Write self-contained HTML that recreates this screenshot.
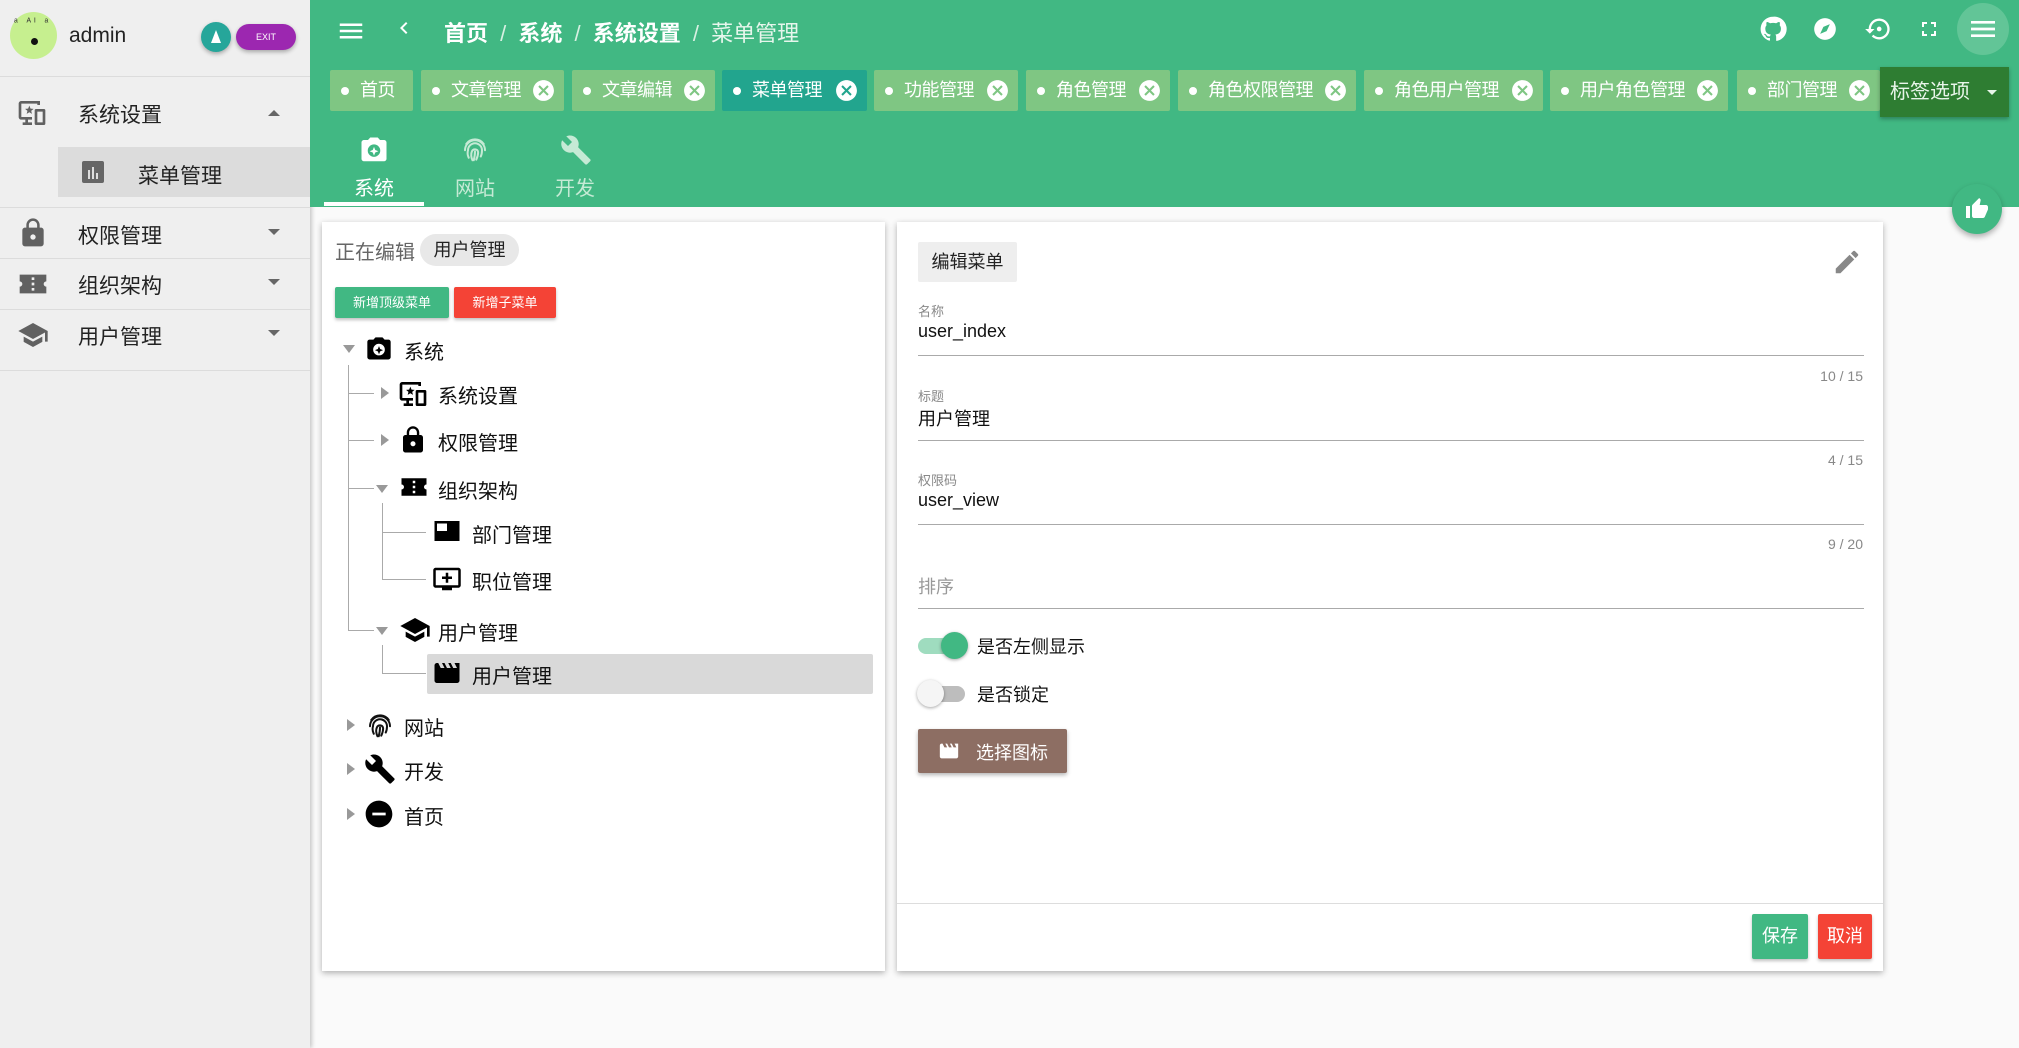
<!DOCTYPE html>
<html><head><meta charset="utf-8">
<style>
*{box-sizing:border-box;margin:0;padding:0}
body{width:2019px;height:1048px;overflow:hidden;background:#fafafa;font-family:"Liberation Sans","Noto Sans CJK SC",sans-serif;position:relative;color:#222}
.a{position:absolute}
svg{display:block}
.side{left:0;top:0;width:310px;height:1048px;background:#efefef;box-shadow:2px 0 4px rgba(0,0,0,.2)}
.hr{position:absolute;left:0;width:310px;height:1px;background:#dcdcdc}
.mi{position:absolute;font-size:21px;color:#222;left:78px}
.green{left:310px;top:0;width:1709px;height:207px;background:#41b883}
.tab{position:absolute;top:70px;height:41px;background:#7fc683;color:#fff;font-size:18px;line-height:41px;padding-left:30px;border-radius:2px;white-space:nowrap;letter-spacing:-0.5px}
.tab:before{content:"";position:absolute;left:11px;top:17px;width:8px;height:8px;border-radius:50%;background:#fff}
.tab .x{position:absolute;right:8px;top:8px;width:25px;height:25px}
.card{background:#fff;box-shadow:0 2px 6px rgba(0,0,0,.3)}
.tr{position:absolute;font-size:20px;color:#111}
.lbl{position:absolute;left:918px;font-size:13px;color:#888}
.val{position:absolute;left:918px;font-size:18px;color:#111}
.line{position:absolute;left:918px;width:946px;height:1px;background:#aaa}
.cnt{position:absolute;right:156px;font-size:14px;color:#888}
.vl{position:absolute;width:1px;background:#aaa}
.hl{position:absolute;height:1px;background:#aaa}
</style></head><body>
<svg width="0" height="0" style="position:absolute">
<defs>
<symbol id="menu" viewBox="0 0 24 24"><path d="M3 18h18v-2H3v2zm0-5h18v-2H3v2zm0-7v2h18V6H3z"/></symbol>
<symbol id="lock" viewBox="0 0 24 24"><path d="M18 8h-1V6c0-2.76-2.24-5-5-5S7 3.24 7 6v2H6c-1.1 0-2 .9-2 2v10c0 1.1.9 2 2 2h12c1.1 0 2-.9 2-2V10c0-1.1-.9-2-2-2zm-6 9c-1.1 0-2-.9-2-2s.9-2 2-2 2 .9 2 2-.9 2-2 2zm3.1-9H8.9V6c0-1.710 1.39-3.1 3.1-3.1 1.71 0 3.1 1.39 3.1 3.1v2z"/></symbol>
<symbol id="school" viewBox="0 0 24 24"><path d="M5 13.18v4L12 21l7-3.82v-4L12 17l-7-3.82zM12 3L1 9l11 6 9-4.91V17h2V9L12 3z"/></symbol>
<symbol id="build" viewBox="0 0 24 24"><path d="M22.7 19l-9.1-9.1c.9-2.3.4-5-1.5-6.9-2-2-5-2.4-7.4-1.3L9 6 6 9 1.6 4.7C.4 7.1.9 10.1 2.9 12.1c1.9 1.9 4.6 2.4 6.9 1.5l9.1 9.1c.4.4 1 .4 1.4 0l2.3-2.3c.5-.4.5-1.1.1-1.4z"/></symbol>
<symbol id="minus" viewBox="0 0 24 24"><path d="M12 2C6.48 2 2 6.48 2 12s4.48 10 10 10 10-4.48 10-10S17.52 2 12 2zm5 11H7v-2h10v2z"/></symbol>
<symbol id="movie" viewBox="0 0 24 24"><path d="M18 4l2 4h-3l-2-4h-2l2 4h-3l-2-4H8l2 4H7L5 4H4c-1.1 0-1.99.9-1.99 2L2 18c0 1.1.9 2 2 2h16c1.1 0 2-.9 2-2V4h-4z"/></symbol>
<symbol id="cam" viewBox="0 0 24 24"><path d="M9 2L7.2 4H4c-1.1 0-2 .9-2 2v13c0 1.1.9 2 2 2h16c1.1 0 2-.9 2-2V6c0-1.1-.9-2-2-2h-3.2L15 2H9zm3 5.5a5 5 0 1 1 0 10 5 5 0 0 1 0-10z"/><path d="M12 9.5l1 2.5 2.5 1-2.5 1-1 2.5-1-2.5-2.5-1 2.5-1z"/></symbol>
<symbol id="finger" viewBox="0 0 24 24"><g fill="none" stroke-width="1.6" stroke-linecap="round"><path d="M5 8a8.5 8.5 0 0 1 14 0"/><path d="M4 13a8 8 0 0 1 16 0"/><path d="M7 19c-1-2-1.2-4-.6-6a5.6 5.6 0 0 1 11.2 0c0 2 0 3-1 5"/><path d="M10 21c-1-2-1.5-5-.5-7a2.6 2.6 0 0 1 5 .5c0 2-.5 4-1.5 6"/><path d="M12 14c0 3-.5 5-1 7"/></g></symbol>
<symbol id="cancel" viewBox="0 0 24 24"><path d="M12 2C6.47 2 2 6.47 2 12s4.47 10 10 10 10-4.47 10-10S17.530 2 12 2zm5 13.59L15.59 17 12 13.41 8.41 17 7 15.59 10.59 12 7 8.41 8.41 7 12 10.59 15.59 7 17 8.41 13.41 12 17 15.59z"/></symbol>
<symbol id="monstar" viewBox="0 0 24 24"><path d="M2 3h16v3h-2V5H4v10h8v2h-3v2h3v2H5v-2h2v-2H4c-1.1 0-2-.9-2-2V5c0-1.1.9-2 2-2z"/><path d="M10 6.5l.9 2.2 2.3.2-1.8 1.5.6 2.3-2-1.3-2 1.3.6-2.3-1.8-1.5 2.3-.2z"/><path d="M15 9h6c.6 0 1 .4 1 1v10c0 .6-.4 1-1 1h-6c-.6 0-1-.4-1-1V10c0-.6.4-1 1-1zm1 2v8h4v-8z"/></symbol>
<symbol id="ticket" viewBox="0 0 24 24"><path d="M2 5h20v5a2 2 0 0 0 0 4v5H2v-5a2 2 0 0 0 0-4zM11 7v2h2V7zm0 4v2h2v-2zm0 4v2h2v-2z" fill-rule="evenodd"/></symbol>
<symbol id="dept" viewBox="0 0 24 24"><path d="M2 4h20v16H2zM4 6v6h8V6z" fill-rule="evenodd"/></symbol>
<symbol id="addmon" viewBox="0 0 24 24"><path d="M21 3H3c-1.1 0-2 .9-2 2v12c0 1.1.9 2 2 2h5v2h8v-2h5c1.1 0 2-.9 2-2V5c0-1.1-.9-2-2-2zm0 14H3V5h18v12zM16 10v2h-3v3h-2v-3H8v-2h3V7h2v3z"/></symbol>
</defs></svg>

<!-- sidebar -->
<div class="a side">
  <div class="a" style="left:10px;top:12px;width:47px;height:47px;border-radius:50%;background:#c6ef8f"></div>
  <div class="a" style="left:31px;top:38px;width:7px;height:7px;border-radius:50%;background:#111"></div>
  <div class="a" style="left:14px;top:17px;font-size:10px;color:#333;letter-spacing:3px">ᵃ ᴬᴵ ᵃ</div>
  <div class="a" style="left:69px;top:24px;font-size:21px;color:#222">admin</div>
  <div class="a" style="left:201px;top:22px;width:30px;height:30px;border-radius:50%;background:#26a69a;box-shadow:0 2px 4px rgba(0,0,0,.3)"><div style="width:0;height:0;margin:8px auto 0;border-left:5px solid transparent;border-right:5px solid transparent;border-bottom:13px solid #fff"></div></div>
  <div class="a" style="left:236px;top:24px;width:60px;height:26px;border-radius:13px;background:#9c27b0;color:#fff;font-size:9px;text-align:center;line-height:26px;box-shadow:0 2px 4px rgba(0,0,0,.3)">EXIT</div>
  <div class="hr" style="top:76px"></div>
  <svg class="a" style="left:16px;top:97px" width="32" height="32" fill="#616161"><use href="#monstar"/></svg>
  <div class="mi" style="top:99px">系统设置</div>
  <svg class="a" style="left:260px;top:100px" width="28" height="28" fill="#666"><path d="M8 16l6-6 6 6z"/></svg>
  <div class="a" style="left:58px;top:147px;width:252px;height:50px;background:#dcdcdc"></div>
  <div class="a" style="left:82px;top:161px;width:22px;height:22px;background:#666;border-radius:2px"><div style="position:absolute;left:6px;top:9px;width:2px;height:9px;background:#ddd"></div><div style="position:absolute;left:10px;top:6px;width:2px;height:12px;background:#ddd"></div><div style="position:absolute;left:14px;top:12px;width:2px;height:6px;background:#ddd"></div></div>
  <div class="mi" style="top:160px;left:138px">菜单管理</div>
  <div class="hr" style="top:207px"></div>
  <svg class="a" style="left:17px;top:217px" width="32" height="32" fill="#616161"><use href="#lock"/></svg>
  <div class="mi" style="top:220px">权限管理</div>
  <svg class="a" style="left:260px;top:219px" width="28" height="28" fill="#666"><path d="M8 10l6 6 6-6z"/></svg>
  <div class="hr" style="top:258px"></div>
  <svg class="a" style="left:17px;top:268px" width="32" height="32" fill="#616161"><use href="#ticket"/></svg>
  <div class="mi" style="top:270px">组织架构</div>
  <svg class="a" style="left:260px;top:269px" width="28" height="28" fill="#666"><path d="M8 10l6 6 6-6z"/></svg>
  <div class="hr" style="top:309px"></div>
  <svg class="a" style="left:17px;top:319px" width="32" height="32" fill="#616161"><use href="#school"/></svg>
  <div class="mi" style="top:321px">用户管理</div>
  <svg class="a" style="left:260px;top:320px" width="28" height="28" fill="#666"><path d="M8 10l6 6 6-6z"/></svg>
  <div class="hr" style="top:370px"></div>
</div>

<!-- green header -->
<div class="a green"></div>
<svg class="a" style="left:336px;top:16px" width="30" height="30" fill="#fff"><use href="#menu"/></svg>
<svg class="a" style="left:392px;top:16px" width="28" height="28" fill="#fff"><path d="M15.41 7.41L14 6l-6 6 6 6 1.41-1.41L10.83 12z"/></svg>
<div class="a" style="left:444px;top:16px;font-size:22px;color:#fff;font-weight:bold;white-space:nowrap">首页 <span style="font-weight:normal;color:#d7f0e2;margin:0 6px">/</span> 系统 <span style="font-weight:normal;color:#d7f0e2;margin:0 6px">/</span> 系统设置 <span style="font-weight:normal;color:#d7f0e2;margin:0 6px">/</span> <span style="font-weight:normal;color:#e6f6ec">菜单管理</span></div>
<svg class="a" style="left:1759px;top:15px" width="28" height="28" fill="#fff" viewBox="0 0 24 24"><path d="M12 1.5a10.5 10.5 0 0 0-3.3 20.5c.5.1.7-.2.7-.5v-1.9c-2.9.6-3.5-1.3-3.5-1.3-.5-1.2-1.2-1.5-1.2-1.5-.9-.7.1-.6.1-.6 1.1.1 1.6 1.1 1.6 1.1.9 1.6 2.5 1.2 3.1.9.1-.7.4-1.2.7-1.4-2.3-.3-4.8-1.2-4.8-5.2 0-1.1.4-2.1 1.1-2.8-.1-.3-.5-1.4.1-2.8 0 0 .9-.3 2.9 1.1a10 10 0 0 1 5.2 0c2-1.4 2.9-1.1 2.9-1.1.6 1.4.2 2.5.1 2.8.7.7 1.1 1.700 1.1 2.8 0 4-2.5 4.9-4.8 5.2.4.3.7 1 .7 2v2.9c0 .3.2.6.7.5A10.5 10.5 0 0 0 12 1.5z"/></svg>
<svg class="a" style="left:1812px;top:16px" width="26" height="26" viewBox="0 0 24 24"><circle cx="12" cy="12" r="10" fill="#fff"/><path d="M16.5 7.5l-3 6.5-6 2.5 3-6.5z" fill="#41b883"/></svg>
<svg class="a" style="left:1864px;top:15px" width="28" height="28" fill="#fff" viewBox="0 0 24 24"><path d="M13 3a9 9 0 0 0-9 9H1l3.89 3.89.07.14L9 12H6c0-3.87 3.13-7 7-7s7 3.13 7 7-3.13 7-7 7c-1.93 0-3.68-.79-4.94-2.06l-1.42 1.42A8.954 8.954 0 0 0 13 21a9 9 0 0 0 0-18z"/><circle cx="13" cy="12" r="2"/></svg>
<svg class="a" style="left:1917px;top:17px" width="24" height="24" fill="#fff" viewBox="0 0 24 24"><path d="M7 14H5v5h5v-2H7v-3zm-2-4h2V7h3V5H5v5zm12 7h-3v2h5v-5h-2v3zM14 5v2h3v3h2V5h-5z"/></svg>
<div class="a" style="left:1957px;top:3px;width:52px;height:52px;border-radius:50%;background:#62c597"></div>
<svg class="a" style="left:1967px;top:13px" width="32" height="32" fill="#fff"><use href="#menu"/></svg>

<!-- tabs -->
<div class="tab" style="left:330px;width:83px">首页</div>
<div class="tab" style="left:421px;width:143px">文章管理<svg class="x" fill="#fff"><use href="#cancel"/></svg></div>
<div class="tab" style="left:572px;width:143px">文章编辑<svg class="x" fill="#fff"><use href="#cancel"/></svg></div>
<div class="tab" style="left:722px;width:145px;background:#22a58e">菜单管理<svg class="x" fill="#fff"><use href="#cancel"/></svg></div>
<div class="tab" style="left:874px;width:144px">功能管理<svg class="x" fill="#fff"><use href="#cancel"/></svg></div>
<div class="tab" style="left:1026px;width:144px">角色管理<svg class="x" fill="#fff"><use href="#cancel"/></svg></div>
<div class="tab" style="left:1178px;width:178px">角色权限管理<svg class="x" fill="#fff"><use href="#cancel"/></svg></div>
<div class="tab" style="left:1364px;width:179px">角色用户管理<svg class="x" fill="#fff"><use href="#cancel"/></svg></div>
<div class="tab" style="left:1550px;width:178px">用户角色管理<svg class="x" fill="#fff"><use href="#cancel"/></svg></div>
<div class="tab" style="left:1737px;width:143px">部门管理<svg class="x" fill="#fff"><use href="#cancel"/></svg></div>
<div class="a" style="left:1880px;top:67px;width:129px;height:50px;background:#2e7d32;color:#e8f5e9;font-size:20px;line-height:50px;padding-left:10px;box-shadow:0 2px 4px rgba(0,0,0,.3)">标签选项<svg class="a" style="left:100px;top:13px" width="24" height="24" fill="#e8f5e9"><path d="M7 10l5 5 5-5z"/></svg></div>

<!-- sub tabs -->
<svg class="a" style="left:359px;top:135px" width="30" height="30" fill="#fff"><use href="#cam"/></svg>
<div class="a" style="left:324px;top:172px;width:100px;text-align:center;font-size:20px;color:#fff">系统</div>
<div class="a" style="left:324px;top:202px;width:100px;height:4px;background:#fff"></div>
<svg class="a" style="left:460px;top:134px" width="30" height="30" stroke="#c5ead5"><use href="#finger"/></svg>
<div class="a" style="left:425px;top:172px;width:100px;text-align:center;font-size:20px;color:#c5ead5">网站</div>
<svg class="a" style="left:560px;top:134px" width="32" height="32" fill="#c5ead5"><use href="#build"/></svg>
<div class="a" style="left:525px;top:172px;width:100px;text-align:center;font-size:20px;color:#c5ead5">开发</div>
<div class="a" style="left:1952px;top:184px;width:50px;height:50px;border-radius:50%;background:#41b883;box-shadow:0 3px 6px rgba(0,0,0,.3)"><svg style="margin:13px" width="24" height="24" fill="#fff" viewBox="0 0 24 24"><path d="M1 21h4V9H1v12zm22-11c0-1.1-.9-2-2-2h-6.31l.95-4.57.03-.32c0-.41-.17-.79-.44-1.06L14.17 1 7.59 7.590C7.22 7.95 7 8.45 7 9v10c0 1.1.9 2 2 2h9c.83 0 1.54-.5 1.84-1.22l3.02-7.05c.09-.23.14-.47.14-.73v-1.91l-.01-.01L23 10z"/></svg></div>

<!-- left card -->
<div class="a card" style="left:322px;top:222px;width:563px;height:749px"></div>
<div class="a" style="left:335px;top:236px;font-size:20px;color:#666">正在编辑</div>
<div class="a" style="left:420px;top:234px;width:99px;height:32px;border-radius:16px;background:#e8e8e8;font-size:18px;line-height:32px;text-align:center;color:#222">用户管理</div>
<div class="a" style="left:335px;top:287px;width:114px;height:31px;background:#41b883;color:#fff;font-size:13px;line-height:31px;text-align:center;border-radius:2px;box-shadow:0 2px 3px rgba(0,0,0,.25)">新增顶级菜单</div>
<div class="a" style="left:454px;top:287px;width:102px;height:31px;background:#f44336;color:#fff;font-size:13px;line-height:31px;text-align:center;border-radius:2px;box-shadow:0 2px 3px rgba(0,0,0,.25)">新增子菜单</div>

<div class="vl" style="left:348px;top:365px;height:266px"></div>
<div class="hl" style="left:348px;width:26px;top:393px"></div>
<div class="hl" style="left:348px;width:26px;top:440px"></div>
<div class="hl" style="left:348px;width:26px;top:488px"></div>
<div class="hl" style="left:348px;width:26px;top:630px"></div>
<div class="vl" style="left:382px;top:503px;height:77px"></div>
<div class="hl" style="left:382px;width:44px;top:532px"></div>
<div class="hl" style="left:382px;width:44px;top:579px"></div>
<div class="vl" style="left:382px;top:645px;height:28px"></div>
<div class="hl" style="left:382px;width:44px;top:673px"></div>
<div class="a" style="left:427px;top:654px;width:446px;height:40px;background:#d9d9d9;border-radius:2px"></div>

<svg class="a" style="left:341px;top:341px" width="16" height="16" fill="#999"><path d="M2 4h12l-6 8z"/></svg>
<svg class="a" style="left:365px;top:335px" width="28" height="28"><use href="#cam"/></svg>
<div class="tr" style="left:404px;top:336px">系统</div>

<svg class="a" style="left:377px;top:385px" width="16" height="16" fill="#999"><path d="M4 2v12l8-6z"/></svg>
<svg class="a" style="left:397px;top:378px" width="32" height="32"><use href="#monstar"/></svg>
<div class="tr" style="left:438px;top:380px">系统设置</div>

<svg class="a" style="left:377px;top:432px" width="16" height="16" fill="#999"><path d="M4 2v12l8-6z"/></svg>
<svg class="a" style="left:398px;top:425px" width="30" height="30"><use href="#lock"/></svg>
<div class="tr" style="left:438px;top:427px">权限管理</div>

<svg class="a" style="left:374px;top:481px" width="16" height="16" fill="#999"><path d="M2 4h12l-6 8z"/></svg>
<svg class="a" style="left:399px;top:472px" width="30" height="30"><use href="#ticket"/></svg>
<div class="tr" style="left:438px;top:475px">组织架构</div>

<svg class="a" style="left:432px;top:516px" width="30" height="30"><use href="#dept"/></svg>
<div class="tr" style="left:472px;top:519px">部门管理</div>

<svg class="a" style="left:432px;top:564px" width="30" height="30"><use href="#addmon"/></svg>
<div class="tr" style="left:472px;top:566px">职位管理</div>

<svg class="a" style="left:374px;top:623px" width="16" height="16" fill="#999"><path d="M2 4h12l-6 8z"/></svg>
<svg class="a" style="left:399px;top:614px" width="32" height="32"><use href="#school"/></svg>
<div class="tr" style="left:438px;top:617px">用户管理</div>

<svg class="a" style="left:432px;top:658px" width="30" height="30"><use href="#movie"/></svg>
<div class="tr" style="left:472px;top:660px">用户管理</div>

<svg class="a" style="left:343px;top:717px" width="16" height="16" fill="#999"><path d="M4 2v12l8-6z"/></svg>
<svg class="a" style="left:365px;top:710px" width="30" height="30" stroke="#111"><use href="#finger"/></svg>
<div class="tr" style="left:404px;top:712px">网站</div>

<svg class="a" style="left:343px;top:761px" width="16" height="16" fill="#999"><path d="M4 2v12l8-6z"/></svg>
<svg class="a" style="left:364px;top:753px" width="32" height="32"><use href="#build"/></svg>
<div class="tr" style="left:404px;top:756px">开发</div>

<svg class="a" style="left:343px;top:806px" width="16" height="16" fill="#999"><path d="M4 2v12l8-6z"/></svg>
<svg class="a" style="left:363px;top:798px" width="32" height="32"><use href="#minus"/></svg>
<div class="tr" style="left:404px;top:801px">首页</div>

<!-- right card -->
<div class="a card" style="left:897px;top:222px;width:986px;height:749px"></div>
<div class="a" style="left:918px;top:242px;width:99px;height:40px;background:#eeeeee;border-radius:2px;font-size:18px;line-height:40px;text-align:center;color:#222">编辑菜单</div>
<svg class="a" style="left:1832px;top:247px" width="30" height="30" fill="#888" viewBox="0 0 24 24"><path d="M3 17.25V21h3.75L17.81 9.94l-3.75-3.75L3 17.25zM20.71 7.04c.39-.39.39-1.02 0-1.41l-2.34-2.34c-.39-.39-1.02-.39-1.41 0l-1.83 1.83 3.75 3.75 1.83-1.83z"/></svg>

<div class="lbl" style="top:301px">名称</div>
<div class="val" style="top:321px">user_index</div>
<div class="line" style="top:355px"></div>
<div class="cnt" style="top:368px">10 / 15</div>

<div class="lbl" style="top:386px">标题</div>
<div class="val" style="top:405px">用户管理</div>
<div class="line" style="top:440px"></div>
<div class="cnt" style="top:452px">4 / 15</div>

<div class="lbl" style="top:470px">权限码</div>
<div class="val" style="top:490px">user_view</div>
<div class="line" style="top:524px"></div>
<div class="cnt" style="top:536px">9 / 20</div>

<div class="val" style="top:573px;color:#999">排序</div>
<div class="line" style="top:608px"></div>

<div class="a" style="left:918px;top:638px;width:44px;height:16px;border-radius:8px;background:#9fdcbf"></div>
<div class="a" style="left:941px;top:632px;width:27px;height:27px;border-radius:50%;background:#41b883;box-shadow:0 1px 3px rgba(0,0,0,.35)"></div>
<div class="a" style="left:977px;top:633px;font-size:18px;color:#111">是否左侧显示</div>

<div class="a" style="left:921px;top:686px;width:44px;height:16px;border-radius:8px;background:#bdbdbd"></div>
<div class="a" style="left:917px;top:680px;width:27px;height:27px;border-radius:50%;background:#f5f5f5;box-shadow:0 1px 3px rgba(0,0,0,.35)"></div>
<div class="a" style="left:977px;top:681px;font-size:18px;color:#111">是否锁定</div>

<div class="a" style="left:918px;top:729px;width:149px;height:44px;background:#8d6e63;border-radius:2px;box-shadow:0 2px 4px rgba(0,0,0,.3)">
<svg class="a" style="left:20px;top:11px" width="22" height="22" fill="#fff"><use href="#movie"/></svg>
<div class="a" style="left:58px;top:10px;font-size:18px;color:#fff">选择图标</div></div>

<div class="a" style="left:897px;top:903px;width:986px;height:1px;background:#ddd"></div>
<div class="a" style="left:1752px;top:914px;width:56px;height:45px;background:#41b883;border-radius:2px;color:#fff;font-size:18px;line-height:45px;text-align:center;box-shadow:0 2px 3px rgba(0,0,0,.25)">保存</div>
<div class="a" style="left:1818px;top:914px;width:54px;height:45px;background:#f44336;border-radius:2px;color:#fff;font-size:18px;line-height:45px;text-align:center;box-shadow:0 2px 3px rgba(0,0,0,.25)">取消</div>
</body></html>
